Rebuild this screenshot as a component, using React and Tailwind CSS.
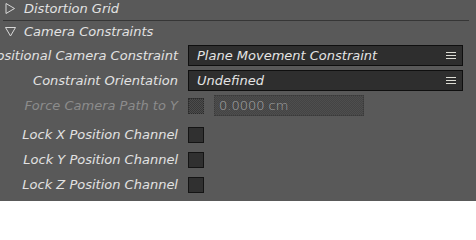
const font = { fontFamily: "'DejaVu Sans', 'Liberation Sans', sans-serif" };

function Tri({ down }) {
  return (
    <svg width="11" height="11" viewBox="0 0 11 11" className="shrink-0">
      {down ? (
        <polygon points="0.5,1.5 10.5,1.5 5.5,10" fill="none" stroke="#d8d8d8" strokeWidth="1" />
      ) : (
        <polygon points="1,0.5 1,10.5 9.5,5.5" fill="none" stroke="#d8d8d8" strokeWidth="1" />
      )}
    </svg>
  );
}

function Menu() {
  return (
    <svg width="10" height="9" viewBox="0 0 10 9" className="shrink-0">
      <rect x="0" y="1" width="10" height="1" fill="#dcdcd4" />
      <rect x="0" y="4" width="10" height="1" fill="#dcdcd4" />
      <rect x="0" y="7" width="10" height="1" fill="#dcdcd4" />
    </svg>
  );
}

function Dropdown({ value }) {
  return (
    <div className="flex items-center justify-between w-[275px] h-[21px] bg-[#2e2e2e] border border-[#0f0f0f] pl-[8px] pr-[6px]">
      <span className="italic font-extralight text-[13px] text-[#e4e4e4] leading-none">{value}</span>
      <Menu />
    </div>
  );
}

function Check() {
  return <div className="w-[16px] h-[16px] bg-[#303030] border border-[#141414]" />;
}

function Row({ label, dim, children, h = "h-[21px]" }) {
  return (
    <div className={`flex items-center ${h}`}>
      <div
        className={`w-[180px] shrink-0 pr-[2px] text-right italic font-extralight text-[13px] whitespace-nowrap overflow-hidden flex justify-end ${
          dim ? "text-[#8c8c8c]" : "text-[#e2e2e2]"
        }`}
      >
        <span>{label}</span>
      </div>
      <div className="flex items-center gap-[10px] pl-[8px]">{children}</div>
    </div>
  );
}

export default function App() {
  return (
    <div className="w-[476px] h-[201px] bg-[#595959] overflow-hidden" style={font}>
      <div className="flex items-center gap-[8px] h-[20px] pl-[5px] pb-[3px]">
        <Tri />
        <span className="italic font-extralight text-[13px] text-[#e2e2e2] leading-none">Distortion Grid</span>
      </div>
      <div className="ml-[3px] w-[466px] h-px bg-[#363636]" />
      <div className="flex items-center gap-[8px] h-[20px] pl-[5px]">
        <Tri down />
        <span className="italic font-extralight text-[13px] text-[#e2e2e2] leading-none">Camera Constraints</span>
      </div>

      <div className="flex flex-col gap-[4px] mt-[4px]">
        <Row label="Positional Camera Constraint">
          <Dropdown value="Plane Movement Constraint" />
        </Row>
        <Row label="Constraint Orientation">
          <Dropdown value="Undefined" />
        </Row>
        <Row label="Force Camera Path to Y" dim>
          <div className="w-[16px] h-[16px] border border-dotted border-[#2a2a2a] bg-[repeating-conic-gradient(#4c4c4c_0_25%,#383838_0_50%)] bg-[length:2px_2px]" />
          <div className="w-[150px] h-[21px] flex items-center pl-[4px] border border-dotted border-[#3a3a3a] bg-[repeating-conic-gradient(#4e4e4e_0_25%,#444_0_50%)] bg-[length:2px_2px]">
            <span className="font-extralight text-[13px] text-[#a8a8a8] leading-none">0.0000 cm</span>
          </div>
        </Row>
      </div>

      <div className="flex flex-col mt-[6px]">
        <Row label="Lock X Position Channel" h="h-[25px]">
          <Check />
        </Row>
        <Row label="Lock Y Position Channel" h="h-[25px]">
          <Check />
        </Row>
        <Row label="Lock Z Position Channel" h="h-[25px]">
          <Check />
        </Row>
      </div>
    </div>
  );
}
